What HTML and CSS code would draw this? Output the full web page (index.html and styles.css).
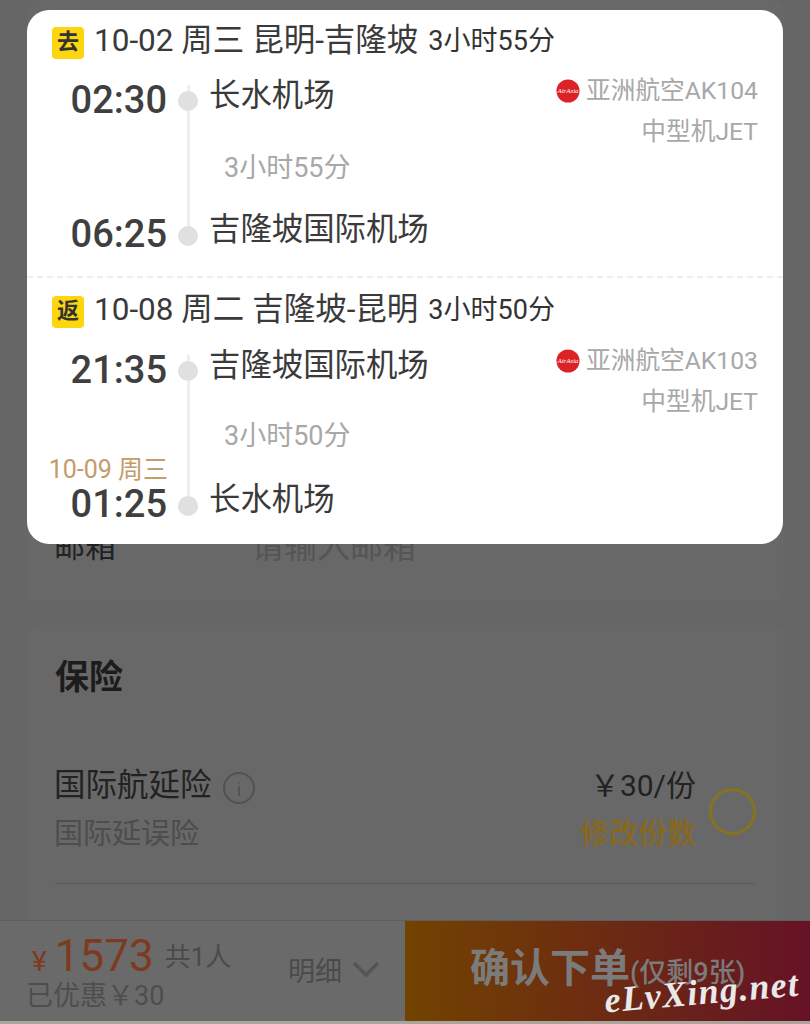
FILE: index.html
```html
<!DOCTYPE html>
<html lang="zh-CN">
<head>
<meta charset="utf-8">
<title>订单填写</title>
<link rel="stylesheet" href="styles.css">
</head>
<body>
<div class="page">
  <section class="card card-contact">
    <div class="contact-row">
      <span class="contact-label">邮箱</span>
      <span class="contact-input">请输入邮箱</span>
    </div>
  </section>
  <section class="card card-insurance">
    <h2 class="ins-title">保险</h2>
    <div class="ins-row">
      <div class="ins-left">
        <div class="ins-name">国际航延险
          <svg class="ins-info" viewBox="0 0 34 34" width="34" height="34"><circle cx="17" cy="17" r="15" fill="none" stroke="#515151" stroke-width="2"/><path d="M17 11v1.6M17 15v10" stroke="#515151" stroke-width="1.6" fill="none"/></svg>
        </div>
        <div class="ins-sub">国际延误险</div>
      </div>
      <div class="ins-right">
        <div class="ins-price">￥30/份</div>
        <div class="ins-edit">修改份数</div>
      </div>
      <span class="ins-radio"></span>
    </div>
  </section>
  <footer class="bar">
    <div class="bar-left">
      <div class="bar-price">
        <div class="price-line"><span class="yen">¥</span><span class="amount">1573</span><span class="people">共1人</span></div>
        <div class="saved">已优惠￥30</div>
      </div>
      <div class="detail">明细
        <svg viewBox="0 0 28 18" width="28" height="18"><path d="M2 3l12 12L26 3" fill="none" stroke="#555" stroke-width="3.5"/></svg>
      </div>
    </div>
    <div class="bar-cta"><span class="cta-main">确认下单</span><span class="cta-sub">(仅剩9张)</span></div>
  </footer>
</div>

<div class="popup">
  <section class="seg">
    <header class="seg-head">
      <span class="badge">去</span>
      <span class="seg-title">10-02 周三 昆明-吉隆坡</span>
      <span class="seg-dur">3小时55分</span>
    </header>
    <div class="leg">
      <div class="time dep">02:30</div>
      <div class="rail"><i class="dot"></i><i class="line"></i><i class="dot"></i></div>
      <div class="port">长水机场</div>
      <div class="flight">
        <div class="airline">
          <svg class="logo" viewBox="0 0 26 26" width="26" height="26"><circle cx="13" cy="13" r="12.5" fill="#dc2127"/><text x="13" y="15.5" text-anchor="middle" class="logo-text">AirAsia</text></svg>
          <span>亚洲航空AK104</span>
        </div>
        <div class="plane">中型机JET</div>
      </div>
      <div class="dur">3小时55分</div>
      <div class="time arr">06:25</div>
      <div class="port arr-port">吉隆坡国际机场</div>
    </div>
  </section>
  <section class="seg seg-return">
    <header class="seg-head">
      <span class="badge">返</span>
      <span class="seg-title">10-08 周二 吉隆坡-昆明</span>
      <span class="seg-dur">3小时50分</span>
    </header>
    <div class="leg">
      <div class="time dep">21:35</div>
      <div class="rail"><i class="dot"></i><i class="line"></i><i class="dot"></i></div>
      <div class="port">吉隆坡国际机场</div>
      <div class="flight">
        <div class="airline">
          <svg class="logo" viewBox="0 0 26 26" width="26" height="26"><circle cx="13" cy="13" r="12.5" fill="#dc2127"/><text x="13" y="15.5" text-anchor="middle" class="logo-text">AirAsia</text></svg>
          <span>亚洲航空AK103</span>
        </div>
        <div class="plane">中型机JET</div>
      </div>
      <div class="dur">3小时50分</div>
      <div class="time arr"><span class="next-day">10-09 周三</span>01:25</div>
      <div class="port arr-port">长水机场</div>
    </div>
  </section>
</div>

<div class="watermark">eLvXing.net</div>
</body>
</html>
```

FILE: styles.css
```css
* { box-sizing: border-box; }
html, body { margin: 0; padding: 0; }
body {
  width: 810px;
  height: 1024px;
  overflow: hidden;
  position: relative;
  background: #666;
  font-family: Roboto, "Noto Sans CJK SC", sans-serif;
  color: #333;
}
.page {
  height: 1024px;
  display: flex;
  flex-direction: column;
}
.card {
  margin: 0 27px;
  background: #686868;
  border-radius: 12px;
}
.card-contact {
  height: 601px;
  display: flex;
  align-items: flex-end;
  padding: 0 27px 36px;
}
.contact-row {
  display: flex;
  font-size: 31px;
  line-height: 36px;
}
.contact-label { width: 197px; color: #222; }
.contact-input { color: #555; font-size: 33px; }
.card-insurance {
  margin-top: 24px;
  flex: 1;
  min-height: 0;
  border-radius: 12px 12px 0 0;
  padding: 0 28px;
}
.ins-title {
  margin: 0;
  height: 108px;
  padding-top: 30px;
  font-size: 34px;
  line-height: 44px;
  font-weight: 700;
  color: #1c1c1c;
  border-bottom: 1px solid #6b6b6b;
}
.ins-row {
  height: 151px;
  display: flex;
  align-items: center;
  border-bottom: 1px solid #585858;
  padding-top: 4px;
}
.ins-left { flex: 1; margin-left: -1px; }
.ins-name {
  display: flex;
  align-items: center;
  gap: 10px;
  font-size: 31.5px;
  line-height: 48px;
  color: #222;
}
.ins-info { margin-top: 4px; }
.ins-sub {
  font-size: 29px;
  line-height: 48px;
  color: #4d4d4d;
}
.ins-right { text-align: right; }
.ins-price {
  font-size: 30px;
  line-height: 48px;
  color: #222;
}
.ins-edit {
  font-size: 29px;
  font-weight: 500;
  line-height: 48px;
  color: #8a681b;
}
.ins-radio {
  width: 47px;
  height: 47px;
  margin: 3px -1px 0 13px;
  border: 3px solid #86721f;
  border-radius: 50%;
}
.bar {
  height: 104px;
  flex: none;
  display: flex;
  border-top: 1px solid #5e5e5e;
  border-bottom: 3px solid #a9a59c;
}
.bar-left {
  width: 405px;
  background: #6a6a6a;
  display: flex;
  justify-content: space-between;
  padding: 12px 25px 0 26px;
}
.price-line {
  display: flex;
  align-items: baseline;
  height: 46px;
}
.yen { font-size: 28px; color: #803a1d; margin: 0 8px 0 6px; }
.amount { font-size: 44px; line-height: 46px; color: #7e3a20; }
.people { font-size: 26px; color: #4a4a4a; margin-left: 11px; position: relative; top: -5px; }
.saved { font-size: 27px; line-height: 34px; color: #4e4e4e; margin-top: 0; }
.detail {
  display: flex;
  align-items: center;
  gap: 10px;
  height: 46px;
  margin-top: 13px;
  font-size: 27px;
  color: #4a4a4a;
}
.bar-cta {
  flex: 1;
  display: flex;
  align-items: baseline;
  padding: 23px 0 0 65px;
  background: linear-gradient(90deg, #724300 0%, #661226 100%);
  color: #7b7b7b;
}
.cta-main { font-size: 40px; font-weight: 700; line-height: 50px; }
.cta-sub { font-size: 27px; font-weight: 500; }

.popup {
  position: absolute;
  left: 27px;
  top: 10px;
  width: 756px;
  height: 534px;
  background: #fff;
  border-radius: 22px;
  overflow: hidden;
}
.seg {
  height: 266px;
  padding: 15px 25px 0;
}
.seg-return {
  height: 268px;
  border-top: 2px dashed #eee;
  padding-top: 16px;
}
.seg-head {
  display: flex;
  align-items: flex-start;
  height: 34px;
}
.badge {
  width: 32px;
  height: 32px;
  margin: 2px 10px 0 0;
  border-radius: 4px;
  background: #fdd60f;
  color: #333;
  font-size: 22px;
  font-weight: 700;
  line-height: 29px;
  text-align: center;
}
.seg-title { font-size: 31.5px; line-height: 32px; color: #3a3a3a; margin-right: 10px; white-space: nowrap; }
.seg-dur { font-size: 27px; line-height: 32px; color: #333; white-space: nowrap; }
.leg {
  display: grid;
  grid-template-columns: 115px 20px 1fr auto;
  grid-template-rows: 70px 49px 70px;
  column-gap: 11px;
  margin-top: 8px;
}
.seg-return .leg { margin-top: 9px; }
.time {
  grid-column: 1;
  display: flex;
  flex-direction: column;
  align-items: flex-end;
  font-size: 38px;
  font-weight: 500;
  line-height: 44px;
  color: #3f3f3f;
}
.time.dep { grid-row: 1; padding-top: 11px; }
.time.arr { grid-row: 3; align-self: end; }
.next-day {
  font-size: 25px;
  font-weight: 400;
  line-height: 24px;
  color: #c39c6b;
  white-space: nowrap;
  margin-right: -1px;
}
.rail {
  grid-column: 2;
  grid-row: 1 / 4;
  display: flex;
  flex-direction: column;
  align-items: center;
  padding: 18px 0 10px;
}
.rail::before {
  content: "";
  flex: none;
  width: 3px;
  height: 6px;
  background: #eee;
}
.dot {
  flex: none;
  width: 20px;
  height: 20px;
  border-radius: 50%;
  background: #e0e0e0;
}
.line {
  flex: 1;
  width: 3px;
  background: #eee;
}
.port {
  grid-column: 3;
  grid-row: 1;
  font-size: 31.4px;
  line-height: 44px;
  color: #3a3a3a;
  padding-top: 7px;
  white-space: nowrap;
}
.arr-port { grid-row: 3; align-self: end; padding: 0 0 4px; }
.flight {
  grid-column: 4;
  grid-row: 1 / 3;
  padding-top: 3px;
  text-align: right;
  font-size: 24.7px;
  line-height: 41px;
  color: #a8a8a8;
}
.airline { display: flex; align-items: center; justify-content: flex-end; gap: 6px; }
.logo { width: 24px; height: 24px; }
.logo-text { font-family: "Liberation Serif", serif; font-style: italic; font-size: 7.5px; fill: #fff; }
.dur {
  grid-column: 3 / 5;
  grid-row: 2;
  align-self: end;
  padding-left: 15px;
  font-size: 27px;
  line-height: 36px;
  color: #a8a8a8;
}
.seg-return .dur { margin-bottom: 2px; }
.watermark {
  position: absolute;
  left: 604px;
  top: 970px;
  font-family: "Liberation Serif", serif;
  font-style: italic;
  font-weight: 700;
  font-size: 36px;
  line-height: 44px;
  letter-spacing: 1.3px;
  color: #e9e9e9;
  transform: rotate(-5deg);
}
```
